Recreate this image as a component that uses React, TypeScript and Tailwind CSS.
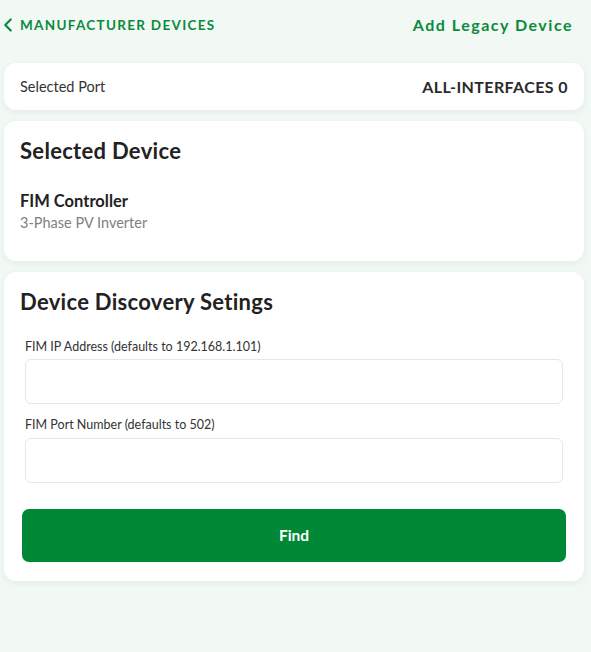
import { ChevronLeft } from "lucide-react"

export default function App() {
  return (
    <div className="min-h-[652px] w-[591px] bg-[#f2f8f4] font-['Lato',sans-serif] text-[#222]">
      <header className="flex h-[50px] items-center justify-between pl-0 pr-[18px] pt-0">
        <button className="flex items-center gap-[1px] text-[#0b8a3c]">
          <ChevronLeft className="-ml-[3px] h-[22px] w-[22px]" strokeWidth={2.4} />
          <span className="text-[13.5px] font-bold tracking-[1.3px] uppercase">Manufacturer Devices</span>
        </button>
        <button className="text-[16px] font-bold tracking-[1.5px] text-[#0b8a3c]">Add Legacy Device</button>
      </header>

      <main className="ml-[4px] mr-[7px] mt-[13px] flex flex-col gap-[11px]">
        <section className="flex h-[47px] items-center justify-between rounded-[12px] bg-white px-[16px] shadow-[0_2px_6px_rgba(40,110,70,0.08)]">
          <span className="text-[14.5px] text-[#333]">Selected Port</span>
          <span className="text-[16px] font-bold tracking-[0.4px] text-[#2a2a2a]">ALL-INTERFACES 0</span>
        </section>

        <section className="h-[140px] rounded-[12px] bg-white px-[16px] pt-[15px] shadow-[0_2px_6px_rgba(40,110,70,0.08)]">
          <h2 className="text-[22px] font-bold leading-[30px] tracking-[0.3px] text-[#222]">Selected Device</h2>
          <div className="mt-[24px] text-[16.5px] font-bold leading-[22px] text-[#222]">FIM Controller</div>
          <div className="mt-[1px] text-[14.5px] leading-[20px] text-[#808080]">3-Phase PV Inverter</div>
        </section>

        <section className="rounded-[12px] bg-white px-[16px] pb-[19px] pt-[15px] shadow-[0_2px_6px_rgba(40,110,70,0.08)]">
          <h2 className="text-[22px] font-bold leading-[30px] tracking-[0.3px] text-[#222]">Device Discovery Setings</h2>
          <div className="mt-[22px] px-[5px]">
            <label className="block text-[12.5px] leading-[16px] text-[#333]">FIM IP Address (defaults to 192.168.1.101)</label>
            <input className="mt-[4px] block h-[45px] w-[538px] rounded-[6px] border border-[#e6e6e6] bg-white outline-none" />
            <label className="mt-[13px] block text-[12.5px] leading-[16px] text-[#333]">FIM Port Number (defaults to 502)</label>
            <input className="mt-[5px] block h-[45px] w-[538px] rounded-[6px] border border-[#e6e6e6] bg-white outline-none" />
          </div>
          <button className="ml-[2px] mt-[26px] flex h-[53px] w-[544px] items-center justify-center rounded-[7px] bg-[#008837] text-[15.5px] font-bold text-white">
            Find
          </button>
        </section>
      </main>
    </div>
  )
}
